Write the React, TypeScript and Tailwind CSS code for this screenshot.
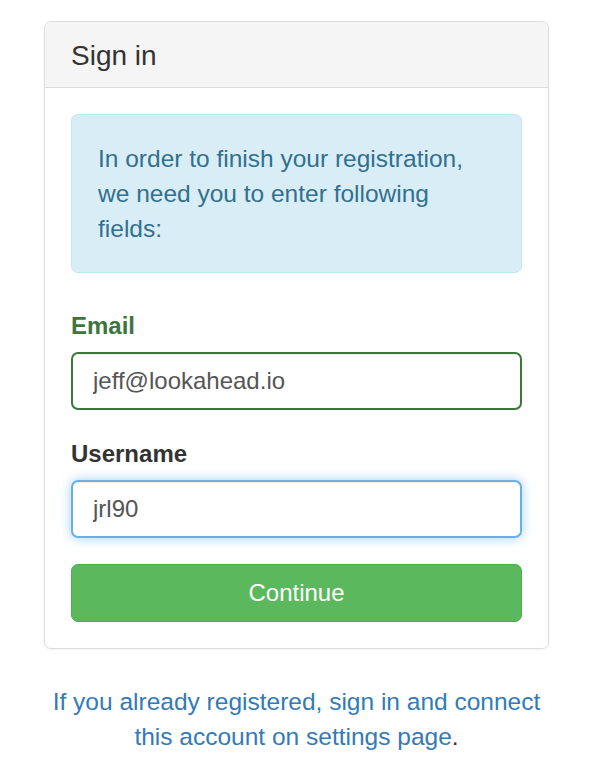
export default function App() {
  return (
    <div className="min-h-screen bg-white font-['Liberation_Sans',Arial,sans-serif] text-[#333]">
      <div className="ml-[44px] w-[505px] pt-[21px]">
        <div className="rounded-[7px] border border-[#ddd] bg-white shadow-[0_1px_2px_rgba(0,0,0,0.05)]">
          <div className="rounded-t-[7px] border-b border-[#ddd] bg-[#f5f5f5] px-[26px] pt-[18px] pb-[16px]">
            <h3 className="text-[28px] leading-[31px] text-[#333]">Sign in</h3>
          </div>
          <div className="p-[26px]">
            <div className="mb-[35px] rounded-[7px] border border-[#bce8f1] bg-[#d9edf7] p-[26px] text-[24.5px] leading-[35px] text-[#31708f]">
              In order to finish your registration,
              <br />
              we need you to enter following
              <br />
              fields:
            </div>
            <div className="mb-[26px]">
              <label className="mb-[9px] block text-[24px] font-bold leading-[35px] text-[#3c763d]">Email</label>
              <input
                readOnly
                value="jeff@lookahead.io"
                className="block h-[58px] w-full rounded-[7px] border-2 border-[#3c763d] px-[20px] text-[24px] text-[#555] shadow-[inset_0_1px_1px_rgba(0,0,0,0.075)] outline-none"
              />
            </div>
            <div className="mb-[26px]">
              <label className="mb-[9px] block text-[24px] font-bold leading-[35px] text-[#333]">Username</label>
              <input
                readOnly
                value="jrl90"
                className="block h-[58px] w-full rounded-[7px] border-2 border-[#66afe9] px-[20px] text-[24px] text-[#555] shadow-[inset_0_1px_1px_rgba(0,0,0,0.075),0_0_12px_rgba(102,175,233,0.6)] outline-none"
              />
            </div>
            <button className="block h-[58px] w-full rounded-[7px] border border-[#4cae4c] bg-[#5cb85c] text-[24px] text-white">
              Continue
            </button>
          </div>
        </div>
        <p className="mt-[35px] text-center text-[24.5px] leading-[35px] text-[#333]">
          <a className="text-[#337ab7]">
            If you already registered, sign in and connect
            <br />
            this account on settings page
          </a>
          .
        </p>
      </div>
    </div>
  );
}
